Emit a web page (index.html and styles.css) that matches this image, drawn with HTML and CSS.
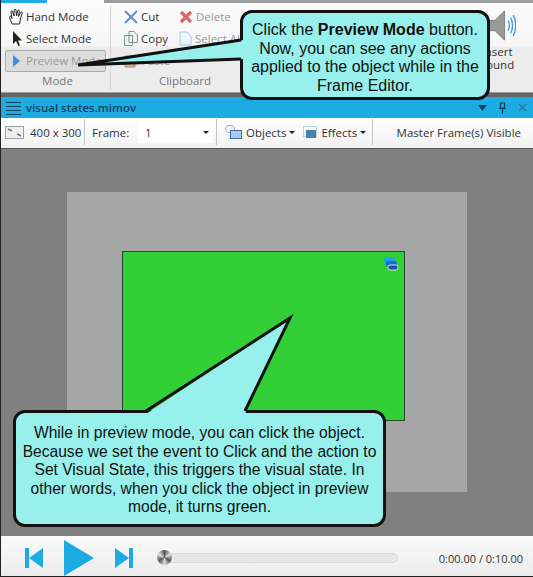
FILE: index.html
```html
<!DOCTYPE html>
<html lang="en">
<head>
    <meta charset="UTF-8">
    <title>Frame Editor preview mode</title>
    <link rel="stylesheet" href="styles.css">
</head>
<body>
    <div class="window">
        <header class="ribbon">
            <div class="tabline"><span class="tabline-active"></span><span class="tabline-rest"></span></div>
            <div class="groups">
                <section class="group group-mode">
                    <div class="group-items">
                        <div class="tool tool-lead">
                            <svg width="17" height="17" viewBox="0 0 17 17"><path d="M4 16 1.500 9.500c-.5-1.300 1-1.700 1.600-.7L4 10.500 3 4c-.2-1.300 1.400-1.500 1.700-.3L6 8 6.200 2.300c0-1.300 1.700-1.300 1.800 0L8.500 8l1.200-5.200c.3-1.200 1.800-.9 1.600.3L10.500 8.500l2-4c.6-1.100 2-.5 1.600.6L12.500 11 11.500 16Z" fill="#fff" stroke="#222" stroke-width="1"/></svg>
                            <span>Hand Mode</span>
                        </div>
                        <div class="tool tool-lead">
                            <svg width="17" height="17" viewBox="0 0 17 17"><path d="M5 1v13l3-3 2.500 5 1.500-.8L10 10.500h4Z" fill="#222"/></svg>
                            <span>Select Mode</span>
                        </div>
                        <div class="tool tool-on">
                            <svg width="12" height="14" viewBox="0 0 12 14"><path d="M3 1 10 7 3 13Z" fill="#3f8fd8"/></svg>
                            <span>Preview Mode</span>
                        </div>
                    </div>
                    <div class="group-label">Mode</div>
                </section>
                <section class="group group-clip">
                    <div class="clip-grid">
                        <div class="tool">
                            <svg width="14" height="14" viewBox="0 0 14 14"><path d="M1 1 13 13M13 1 1 13" stroke="#5f93c9" stroke-width="2"/></svg>
                            <span>Cut</span>
                        </div>
                        <div class="tool tool-dim">
                            <svg width="14" height="14" viewBox="0 0 14 14"><path d="M2 2 12 12M12 2 2 12" stroke="#d66a6a" stroke-width="3.500"/></svg>
                            <span>Delete</span>
                        </div>
                        <div class="tool">
                            <svg width="14" height="15" viewBox="0 0 14 15"><path d="M.5 4.500h8v10h-8ZM5 .5h5l3.500 3.500v7.500H5Z" fill="#eef3ee" stroke="#7d9490"/></svg>
                            <span>Copy</span>
                        </div>
                        <div class="tool tool-dim">
                            <svg width="13" height="15" viewBox="0 0 13 15"><path d="M1 1h7l4 4v9H1Z" fill="#eef5fb" stroke="#a9c6de"/></svg>
                            <span>Select All</span>
                        </div>
                        <div class="tool tool-dim">
                            <svg width="14" height="15" viewBox="0 0 14 15"><path d="M1 3h10v11H1Z" fill="#d9b393" stroke="#b08a6c"/></svg>
                            <span>Paste</span>
                        </div>
                    </div>
                    <div class="group-label">Clipboard</div>
                </section>
                <section class="group group-sound">
                    <svg class="sound-icon" width="28" height="31" viewBox="0 0 32 36"><path d="M1 12h7L19 1v34L8 24H1Z" fill="#9a9a9a" stroke="#777"/><path d="M23 12c2 3 2 9 0 12M26 9c3 5 3 13 0 18M29 6c4 7 4 17 0 24" fill="none" stroke="#2d9be0" stroke-width="1.500"/></svg>
                    <div class="sound-label">Insert<br>Sound</div>
                </section>
            </div>
        </header>

        <div class="titlebar">
            <svg width="15" height="14" viewBox="0 0 15 14"><path d="M0 1.500h15M0 5.500h15M0 9.500h15M0 13.500h15" stroke="#123f5f"/></svg>
            <span class="titlebar-name">visual states.mimov</span>
            <div class="titlebar-btns">
                <svg width="9" height="6" viewBox="0 0 9 6"><path d="M0 0h9L4.500 6Z" fill="#123f5f"/></svg>
                <svg width="9" height="12" viewBox="0 0 9 12"><path d="M2.500 1h4v5h-4ZM1 6.500h7M4.500 7v5" fill="none" stroke="#123f5f" stroke-width="1.200"/></svg>
                <svg width="9" height="9" viewBox="0 0 9 9"><path d="M1 1 8 8M8 1 1 8" stroke="#3b6f93" stroke-width="1.200"/></svg>
            </div>
        </div>

        <div class="toolbar">
            <div class="toolbar-cell cell-size">
                <svg width="19" height="13" viewBox="0 0 19 13"><rect x=".5" y=".5" width="18" height="12" fill="#efefef" stroke="#a0a0a0"/><path d="M3 3 7 5M12 8l4 2" stroke="#777" stroke-width="1.500"/></svg>
                <span>400 x 300</span>
            </div>
            <div class="toolbar-cell cell-frame">
                <span>Frame:</span>
                <div class="frame-select"><span>1</span><i class="caret"></i></div>
            </div>
            <div class="toolbar-cell cell-menus">
                <svg width="17" height="15" viewBox="0 0 17 15"><ellipse cx="5" cy="4" rx="4.500" ry="3.500" fill="#f4f4f4" stroke="#aaa"/><rect x="5.500" y="5.500" width="11" height="8" fill="#a9c9ee" stroke="#3f6fb0"/></svg>
                <span>Objects</span><i class="caret"></i>
                <svg class="effects-icon" width="14" height="13" viewBox="0 0 14 13"><rect x=".5" y=".5" width="13" height="10" fill="none" stroke="#6aa9e0" stroke-dasharray="1 1"/><rect x="3" y="4" width="10" height="8" fill="#4c7fae"/></svg>
                <span>Effects</span><i class="caret"></i>
            </div>
            <div class="toolbar-cell cell-master">Master Frame(s) Visible</div>
        </div>

        <main class="stage">
            <div class="frame">
                <div class="object">
                    <svg class="object-badge" width="15" height="14" viewBox="0 0 15 14"><rect x="0" y="0" width="11" height="6" rx="2" fill="#1da7e0"/><rect x="2" y="4" width="11" height="6" rx="2" fill="#1a6fc4"/><rect x="4" y="8" width="10" height="5" rx="2" fill="#1c4fa0" stroke="#d8d8e8"/></svg>
                </div>
            </div>
        </main>

        <footer class="player">
            <svg width="19" height="20" viewBox="0 0 19 20"><path d="M0 0h4v20H0ZM18 0v20L4 10Z" fill="#1cace3"/></svg>
            <svg class="player-play" width="30" height="36" viewBox="0 0 30 36"><path d="M0 0 30 18 0 36Z" fill="#1cace3"/></svg>
            <svg width="19" height="20" viewBox="0 0 19 20"><path d="M0 0 14 10 0 20ZM14 0h4v20h-4Z" fill="#1cace3"/></svg>
            <div class="seek"><span class="seek-knob"></span></div>
            <span class="player-time">0:00.00 / 0:10.00</span>
        </footer>

        <div class="callout callout-top">Click the <b>Preview Mode</b> button. Now, you can see any actions applied to the object while in the Frame Editor.</div>
        <div class="callout callout-bottom">While in preview mode, you can click the object. Because we set the event to Click and the action to Set Visual State, this triggers the visual state. In other words, when you click the object in preview mode, it turns green.</div>
        <svg class="tails" width="533" height="577" viewBox="0 0 533 577">
            <path class="tail-fill" d="M244 40 78 65 244 59Z"/>
            <path class="tail-line" d="M241 40 78 65 241 59"/>
            <path class="tail-fill" d="M146 414 290 318 245 414Z"/>
            <path class="tail-line" d="M146 411 290 318 245 411"/>
        </svg>
    </div>
</body>
</html>
```

FILE: styles.css
```css
* {
    box-sizing: border-box;
}
body {
    margin: 0;
    font-family: "Open Sans", "Liberation Sans", sans-serif;
    font-size: 11.5px;
    color: #333;
}
.window {
    position: relative;
    width: 533px;
    height: 577px;
    overflow: hidden;
    display: flex;
    flex-direction: column;
    border-left: 1px solid #222;
    border-bottom: 1px solid #222;
    background: #666;
}

/* ribbon */
.ribbon {
    height: 93px;
    background: linear-gradient(#fbfbfb, #f6f6f6 50%, #ececec 51%, #ececec);
    border-bottom: 1px solid #999;
}
.tabline {
    display: flex;
    height: 3px;
}
.tabline-active {
    width: 52px;
    background: #1cace3;
}
.tabline-rest {
    width: 480px;
    margin-left: 57px;
    background: #9c9c9c;
}
.groups {
    display: flex;
    height: 89px;
}
.group {
    display: flex;
    flex-direction: column;
    margin-top: 3px;
    height: 84px;
    border-right: 1px solid #d4d4d4;
}
.group-mode {
    width: 110px;
    padding-left: 4px;
}
.group-clip {
    width: 358px;
    padding-left: 13px;
    border-right: 0;
}
.group-items {
    display: flex;
    flex-direction: column;
    height: 66px;
}
.group-label {
    padding-bottom: 2px;
    text-align: center;
    color: #777;
    line-height: 18px;
}
.group-clip .group-label {
    width: 122px;
}
.tool {
    display: flex;
    align-items: center;
    gap: 3px;
    height: 22px;
    padding-bottom: 1px;
    white-space: nowrap;
}
.tool-lead {
    gap: 1px;
    padding-left: 3px;
}
.tool-on {
    width: 101px;
    padding-left: 4px;
    gap: 4px;
    color: #999;
    background: #dcdcdc;
    border: 1px solid #aaa;
    border-radius: 2px;
}
.tool-dim {
    color: #9a9a9a;
}
.clip-grid {
    display: grid;
    grid-template-columns: 55px 100px;
    grid-auto-rows: 22px;
    height: 66px;
}
.group-sound {
    align-items: center;
    width: 56px;
    border-right: 0;
}
.sound-icon {
    margin-top: 4px;
    margin-left: 10px;
}
.sound-label {
    margin-top: 4px;
    text-align: center;
    line-height: 13px;
}

/* document title bar */
.titlebar {
    display: flex;
    align-items: center;
    gap: 5px;
    height: 21px;
    margin-top: 4px;
    padding: 0 6px 0 5px;
    background: #1cace3;
}
.titlebar-name {
    flex: 1;
    font-weight: 600;
    color: #123f5f;
}
.titlebar-btns {
    display: flex;
    align-items: center;
    gap: 11px;
}

/* toolbar */
.toolbar {
    display: flex;
    align-items: center;
    height: 30px;
    padding-bottom: 2px;
    background: linear-gradient(#fff, #f1f1f1);
}
.toolbar-cell {
    display: flex;
    align-items: center;
    height: 26px;
    border-right: 1px solid #c4c4c4;
}
.cell-size {
    width: 84px;
    padding-left: 4px;
    gap: 6px;
}
.cell-frame {
    width: 132px;
    padding-left: 7px;
}
.frame-select {
    display: flex;
    align-items: center;
    justify-content: space-between;
    width: 75px;
    height: 22px;
    margin-left: auto;
    margin-right: 3px;
    padding: 0 4px 0 7px;
    background: #fff;
}
.caret {
    display: inline-block;
    width: 0;
    height: 0;
    border-left: 3px solid transparent;
    border-right: 3px solid transparent;
    border-top: 3px solid #222;
}
.cell-menus {
    width: 156px;
    padding-left: 8px;
    gap: 3px;
}
.effects-icon {
    margin-left: 5px;
}
.cell-menus span {
    margin-left: 1px;
}
.cell-master {
    flex: 1;
    justify-content: flex-end;
    padding-right: 12px;
    border-right: 0;
    white-space: nowrap;
}

/* stage */
.stage {
    flex: 1;
    display: flex;
    justify-content: center;
    align-items: flex-start;
    padding-top: 43px;
    background: #808080;
    border-top: 1px solid #555;
}
.frame {
    width: 400px;
    height: 300px;
    padding: 59px 0 0 55px;
    background: #a6a6a6;
}
.object {
    position: relative;
    width: 283px;
    height: 170px;
    background: #32cf36;
    border: 1px solid #1f4a2a;
}
.object-badge {
    position: absolute;
    top: 5px;
    right: 5px;
}

/* player */
.player {
    display: flex;
    align-items: center;
    height: 40px;
    padding: 4px 10px 0 24px;
    background: linear-gradient(#fafafa, #ececec);
}
.player-play {
    flex: none;
    margin: 0 21px 0 20px;
}
.seek {
    position: relative;
    width: 241px;
    height: 10px;
    margin-left: 23px;
    background: #e4e8e8;
    border-radius: 5px;
    border: 1px solid #d8d8d8;
}
.seek-knob {
    position: absolute;
    left: -1px;
    top: -4px;
    width: 15px;
    height: 15px;
    border-radius: 50%;
    background: conic-gradient(#555, #ddd, #555, #ddd, #555, #ddd, #555);
}
.player-time {
    margin-left: auto;
    font-size: 11px;
    white-space: nowrap;
}

/* callouts, these sit over the screenshot */
.tails {
    position: absolute;
    left: -1px;
    top: 0;
}
.tail-fill {
    fill: #97f0ec;
}
.tail-line {
    fill: none;
    stroke: #111;
    stroke-width: 3;
}
.callout {
    position: absolute;
    text-align: center;
    font-family: "Liberation Sans", Arial, sans-serif;
    font-size: 16px;
    line-height: 18.500px;
    color: #111;
    background: #97f0ec;
    border: 3px solid #111;
    border-radius: 12px;
}
.callout-top {
    left: 239px;
    top: 10px;
    width: 250px;
    height: 90px;
    padding: 8px 8px 0;
}
.callout-bottom {
    left: 12px;
    top: 410px;
    width: 373px;
    height: 117px;
    padding: 11px 2px 0;
    font-size: 15.600px;
}
```
